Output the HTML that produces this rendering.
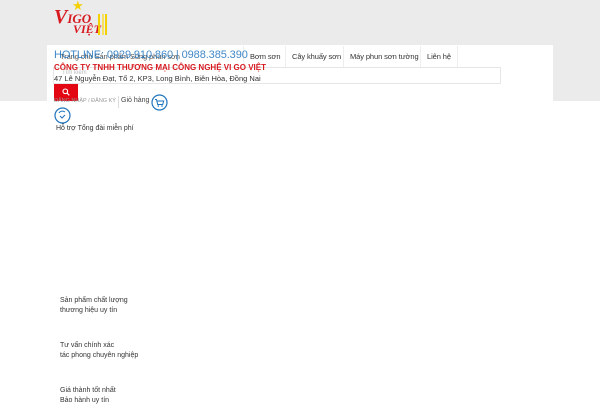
<!DOCTYPE html>
<html><head><meta charset="utf-8"><style>
*{margin:0;padding:0;box-sizing:border-box}
body{width:600px;height:400px;background:#fff;font-family:"Liberation Sans",sans-serif;position:relative;overflow:hidden}
.bg{position:absolute;left:0;top:0;width:600px;height:101px;background:#ebebeb}
.panel{position:absolute;left:47px;top:45px;width:506px;height:56px;background:#fff}
.a{position:absolute;white-space:nowrap}
.nav{font-size:7.5px;color:#333;top:52px;letter-spacing:-.1px}
.sep{position:absolute;top:46px;width:1px;height:22px;background:#eee}
</style></head><body>
<div class="bg"></div>
<div class="panel"></div>
<!-- logo -->
<div class="a" style="left:54px;top:6px;font:italic bold 20px 'Liberation Serif',serif;color:#d71920">V<span style="font-size:13px">IGO</span></div>
<div class="a" style="left:73px;top:22px;font:italic bold 12px 'Liberation Serif',serif;color:#d71920">VIỆT</div>
<div class="a" style="left:72px;top:-2px;font-size:13px;color:#f5d000">★</div>
<div class="a" style="left:98px;top:14px;width:2px;height:21px;background:#f3d000"></div>
<div class="a" style="left:102px;top:14px;width:2px;height:21px;background:#f6e060"></div>
<div class="a" style="left:105px;top:14px;width:2px;height:21px;background:#f3d000"></div>
<!-- nav -->
<div class="a nav" style="left:60px;color:#555">Trang chủ  Sản phẩm  Súng phun sơn</div>
<div class="sep" style="left:243px"></div>
<div class="a nav" style="left:250px">Bơm sơn</div>
<div class="sep" style="left:285px"></div>
<div class="a nav" style="left:292px">Cây khuấy sơn</div>
<div class="sep" style="left:343px"></div>
<div class="a nav" style="left:350px">Máy phun sơn tường</div>
<div class="sep" style="left:420px"></div>
<div class="a nav" style="left:427px">Liên hệ</div>
<div class="sep" style="left:457px"></div>
<div class="a" style="left:54px;top:49px;font-size:11px;color:#1e73be;opacity:.85;letter-spacing:-.1px">HOTLINE: 0929.910.860 | 0988.385.390</div>
<!-- search -->
<div class="a" style="left:53px;top:67px;width:448px;height:17px;border:1px solid #e6e6e6;background:#fff"></div>
<div class="a" style="left:54px;top:63px;font-size:8px;font-weight:bold;color:#d71920">CÔNG TY TNHH THƯƠNG MẠI CÔNG NGHỆ VI GO VIỆT</div>
<div class="a" style="left:62px;top:70px;font-size:6px;color:#bbb">Tìm kiếm</div>
<div class="a" style="left:54px;top:74px;font-size:7.5px;color:#333">47 Lê Nguyễn Đạt, Tổ 2, KP3, Long Bình, Biên Hòa, Đồng Nai</div>
<div class="a" style="left:54px;top:84px;width:24px;height:17px;background:#e30613"></div>
<svg class="a" style="left:62px;top:88px" width="8" height="8" viewBox="0 0 8 8"><circle cx="3.3" cy="3.3" r="2.3" fill="none" stroke="#fff" stroke-width="1.1"/><path d="M5 5 L7.3 7.3" stroke="#fff" stroke-width="1.2"/></svg>
<!-- account -->
<div class="a" style="left:54px;top:98px;font-size:5.5px;color:#999">ĐĂNG NHẬP / ĐĂNG KÝ</div>
<div class="a" style="left:118px;top:96px;width:1px;height:12px;background:#ddd"></div>
<div class="a" style="left:121px;top:97px;font-size:7px;color:#444">Giỏ hàng</div>
<svg class="a" style="left:151px;top:94px" width="17" height="17" viewBox="0 0 17 17"><circle cx="8.5" cy="8.5" r="7.5" fill="none" stroke="#1e73be" stroke-width="1.2"/><path d="M4 5.5h1.5l1.2 5h5l1-3.5H6" fill="none" stroke="#1e73be" stroke-width="1"/><circle cx="7.3" cy="12" r=".8" fill="#1e73be"/><circle cx="11" cy="12" r=".8" fill="#1e73be"/></svg>
<svg class="a" style="left:54px;top:107px" width="17" height="17" viewBox="0 0 17 17"><circle cx="8.5" cy="8.5" r="7.5" fill="none" stroke="#1e73be" stroke-width="1.2"/><path d="M5 6c1-2 4-2.5 6-1M6 9l2 2 3-3" fill="none" stroke="#1e73be" stroke-width="1"/></svg>
<div class="a" style="left:56px;top:125px;font-size:7px;color:#333">Hỗ trợ Tổng đài miễn phí</div>
<!-- features -->
<div class="a" style="left:60px;top:296px;font-size:7px;color:#333;line-height:10px">Sản phẩm chất lượng<br>thương hiệu uy tín</div>
<div class="a" style="left:60px;top:341px;font-size:7px;color:#333;line-height:10px">Tư vấn chính xác<br>tác phong chuyên nghiệp</div>
<div class="a" style="left:60px;top:386px;font-size:7px;color:#333;line-height:10px">Giá thành tốt nhất<br>Bảo hành uy tín</div>
</body></html>
